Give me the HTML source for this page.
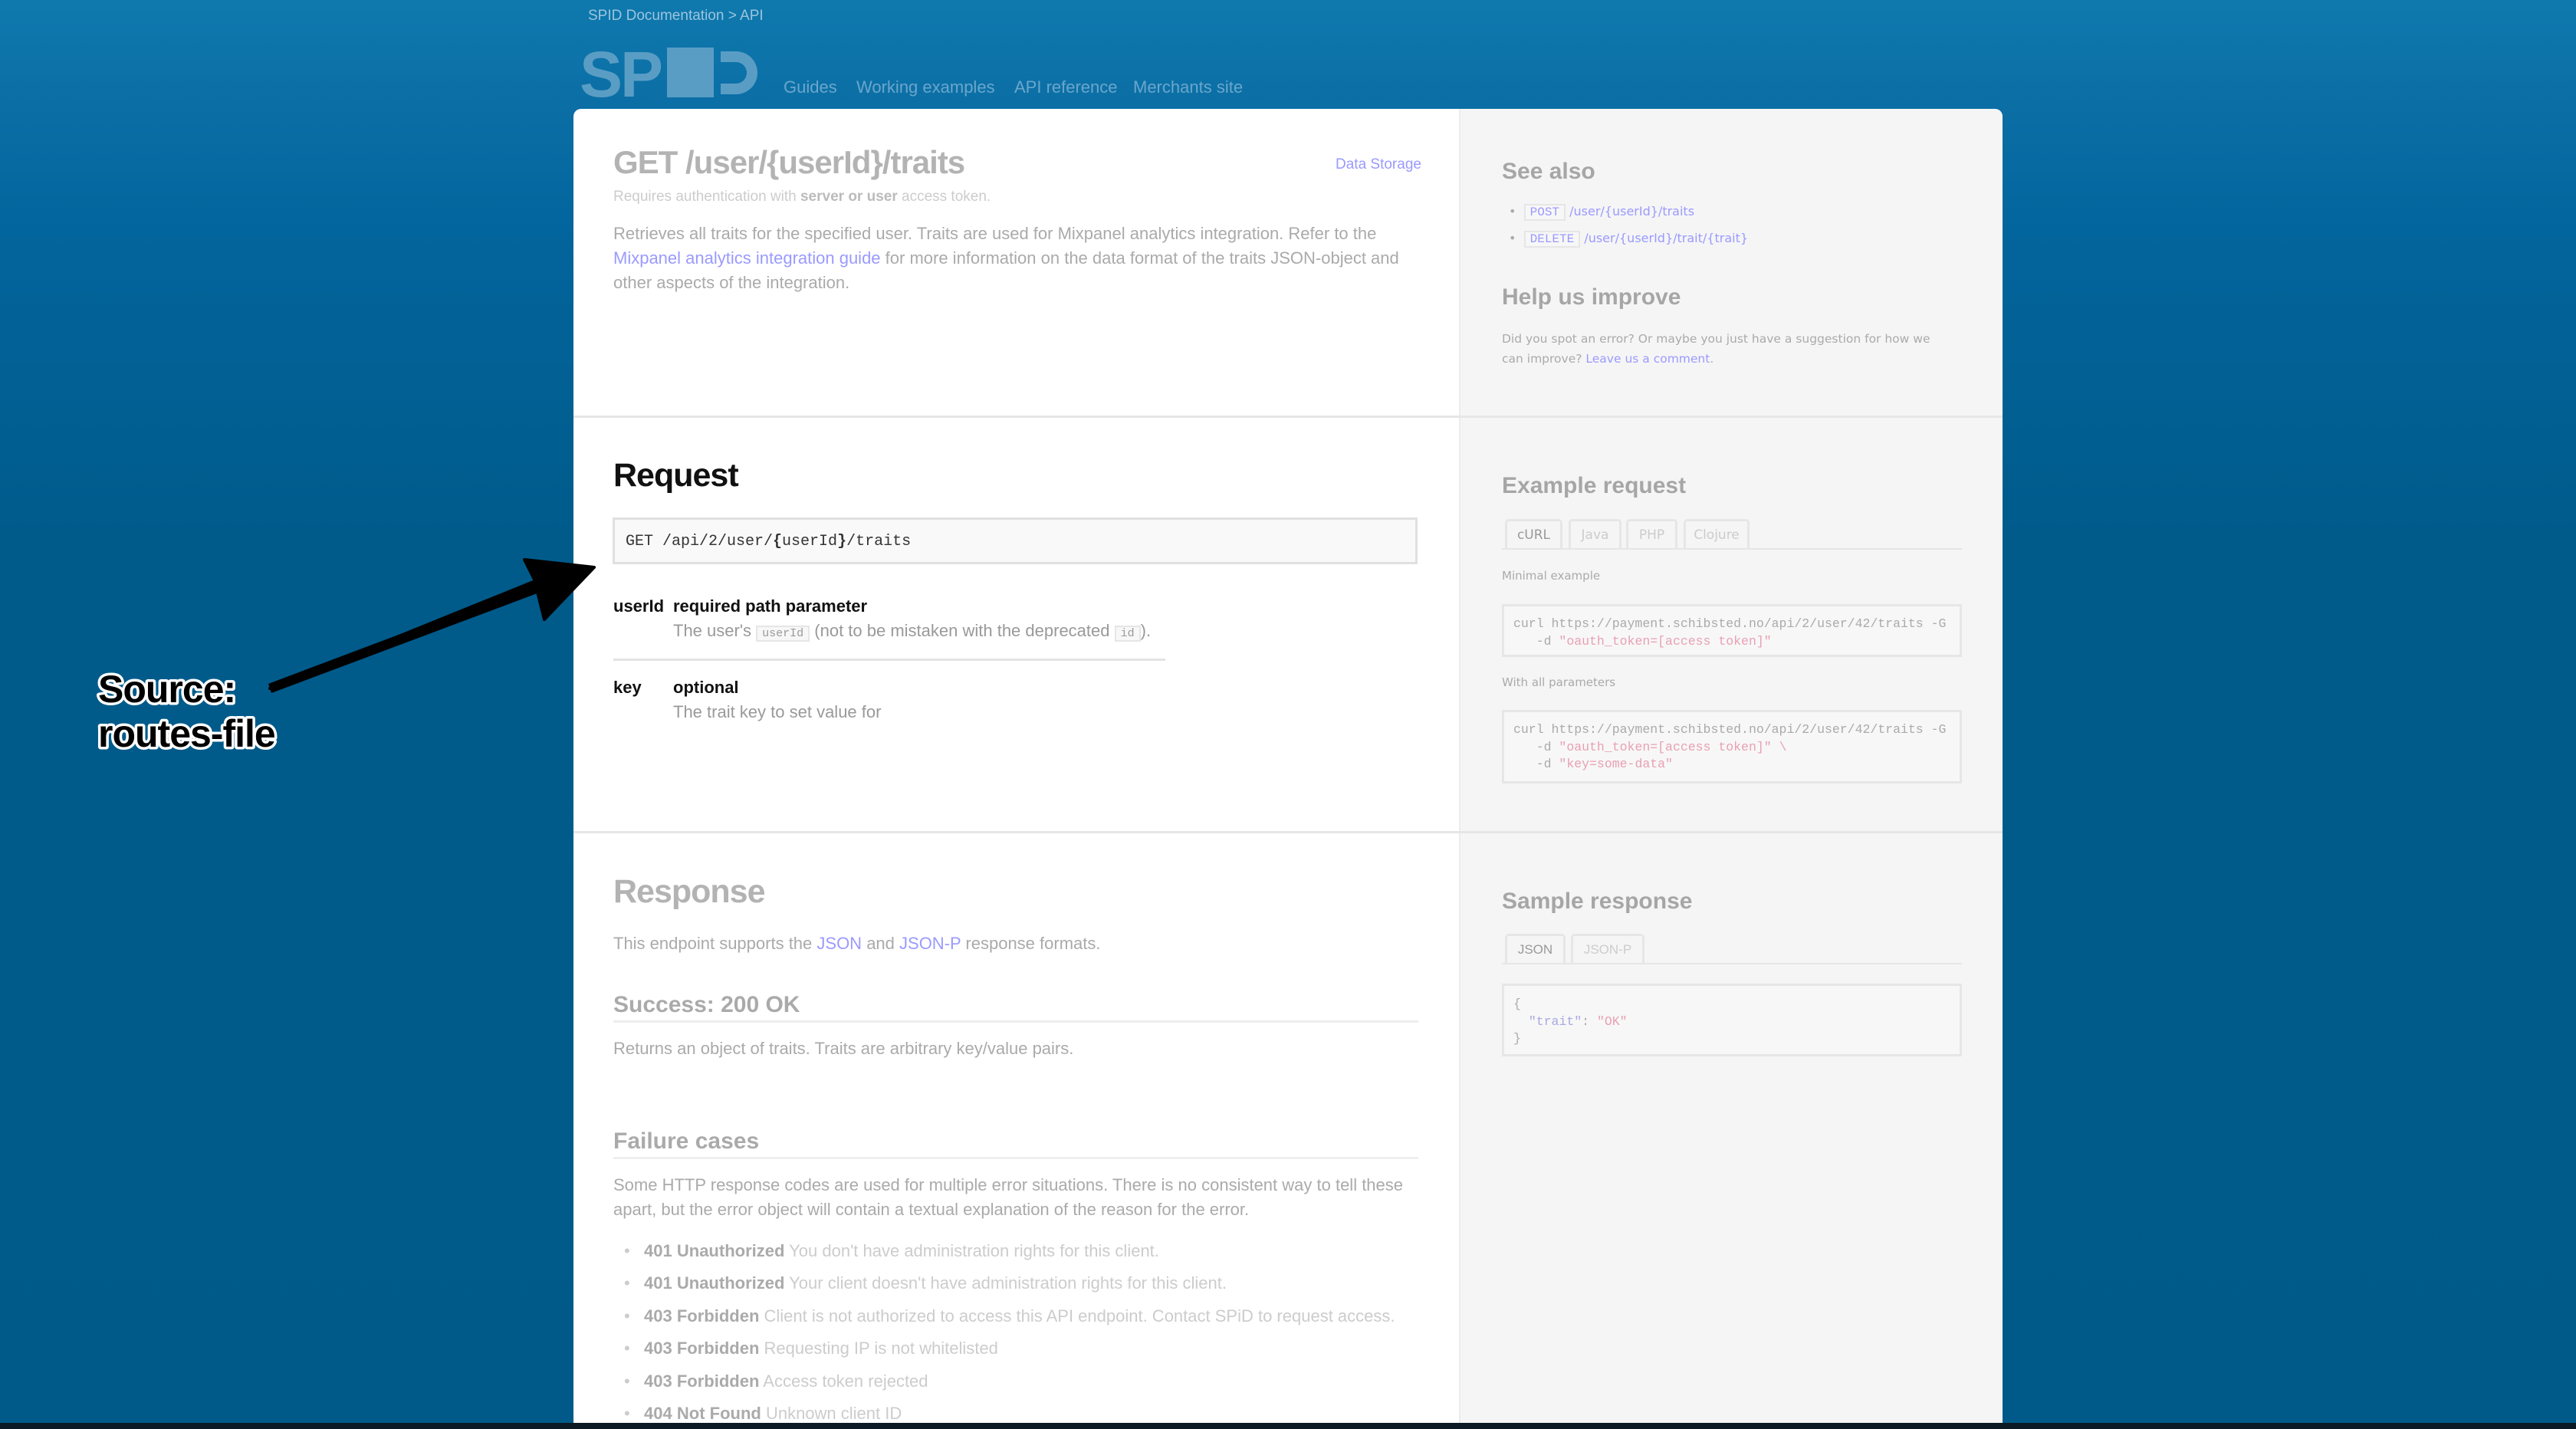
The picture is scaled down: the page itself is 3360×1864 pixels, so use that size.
<!DOCTYPE html>
<html><head><meta charset="utf-8"><style>
*{margin:0;padding:0;box-sizing:border-box}
body{width:3360px;height:1864px;overflow:hidden;position:relative;font-family:"Liberation Sans",Arial,sans-serif;background:linear-gradient(#0f79ae 0px,#0b6ea5 140px,#03659d 300px,#005b8b 700px,#005a89 1864px)}
.a{position:absolute;white-space:nowrap}
.card{position:absolute;left:748px;top:142px;width:1864px;height:1722px;background:#fff;border-radius:10px 10px 0 0;overflow:hidden}
.side{position:absolute;left:1155px;top:0;width:709px;height:100%;background:#f5f5f5;border-left:2px solid #ececec}
.hr{position:absolute;left:0;width:1864px;height:3px;background:#e6e6e6}
.p{color:#aaa;font-size:22px}
.lk{color:#9a9aff}
.sd{font-family:"DejaVu Sans",sans-serif;font-size:16px;color:#aaa}
.h3{font-weight:bold;font-size:30px;color:#a6a6a6}
.code{position:absolute;left:1211px;width:600px;border:3px solid #e6e6e6;background:#f7f7f7;font-family:"Liberation Mono",monospace;font-size:16.5px;color:#aaa;line-height:22.5px;padding:12px 0 0 12px;white-space:pre}
.s{color:#e8a0b4}
.tab{position:absolute;height:40px;border:3px solid #e6e6e6;border-bottom:none;border-radius:5px 5px 0 0;font-size:17px;color:#ccc;font-family:"DejaVu Sans",sans-serif;text-align:center;line-height:36px}
.tab.on{color:#999;background:#f5f5f5}
.tk{border:2px solid #e6e6e6;background:#f7f7f7;font-family:"Liberation Mono",monospace;font-size:15px;padding:0 6px}
</style></head><body>
<div class="a" style="left:767px;top:10px;font-size:19px;color:#9cc4dd">SPID Documentation &gt; API</div>
<div class="a" style="left:756px;top:52px;font-size:84px;font-weight:bold;color:#5a9dc4;letter-spacing:-3px;line-height:90px">SP</div>
<div class="a" style="left:870px;top:62px;width:61px;height:65px;background:#5a9dc4"></div>
<div class="a" style="left:940px;top:67px;width:48px;height:56px;border:14px solid #5a9dc4;border-left:none;border-radius:0 28px 28px 0"></div>
<div class="a" style="left:1022px;top:101px;font-size:22px;color:#6aa6cc">Guides</div>
<div class="a" style="left:1117px;top:101px;font-size:22px;color:#6aa6cc">Working examples</div>
<div class="a" style="left:1323px;top:101px;font-size:22px;color:#6aa6cc">API reference</div>
<div class="a" style="left:1478px;top:101px;font-size:22px;color:#6aa6cc">Merchants site</div>

<div class="card">
<div class="side"></div>
<div class="hr" style="top:400px"></div>
<div class="hr" style="top:942px"></div>

<div class="a" style="left:52px;top:46px;font-size:42px;font-weight:bold;color:#b3b3b3;letter-spacing:-1px">GET /user/{userId}/traits</div>
<div class="a lk" style="left:994px;top:62px;font-size:19px">Data Storage</div>
<div class="a" style="left:52px;top:104px;font-size:19px;color:#ccc">Requires authentication with <b style="color:#bbb">server or user</b> access token.</div>
<div class="a p" style="left:52px;top:147px;line-height:32px">Retrieves all traits for the specified user. Traits are used for Mixpanel analytics integration. Refer to the<br><span class="lk">Mixpanel analytics integration guide</span> for more information on the data format of the traits JSON-object and<br>other aspects of the integration.</div>

<div class="a" style="left:52px;top:454px;font-size:43px;font-weight:bold;color:#111;letter-spacing:-1px">Request</div>
<div class="a" style="left:51px;top:533px;width:1050px;height:61px;border:3px solid #e0e0e0;background:#f9f9f9;font-family:'Liberation Mono',monospace;font-size:20px;color:#333;line-height:58px;padding-left:14px">GET /api/2/user/<b>{</b>userId<b>}</b>/traits</div>
<div class="a" style="left:52px;top:636px;font-size:22px;font-weight:bold;color:#111">userId</div>
<div class="a" style="left:130px;top:636px;font-size:22px;font-weight:bold;color:#111">required path parameter</div>
<div class="a p" style="left:130px;top:668px;color:#999">The user's <span class="tk">userId</span> (not to be mistaken with the deprecated <span class="tk">id</span>).</div>
<div class="a" style="left:52px;top:717px;width:720px;height:3px;background:#e3e3e3"></div>
<div class="a" style="left:52px;top:742px;font-size:22px;font-weight:bold;color:#111">key</div>
<div class="a" style="left:130px;top:742px;font-size:22px;font-weight:bold;color:#111">optional</div>
<div class="a p" style="left:130px;top:774px;color:#999">The trait key to set value for</div>

<div class="a" style="left:52px;top:997px;font-size:43px;font-weight:bold;color:#b3b3b3;letter-spacing:-1px">Response</div>
<div class="a p" style="left:52px;top:1076px">This endpoint supports the <span class="lk">JSON</span> and <span class="lk">JSON-P</span> response formats.</div>
<div class="a" style="left:52px;top:1152px;font-size:30px;font-weight:bold;color:#aaa">Success: 200 OK</div>
<div class="a" style="left:52px;top:1189px;width:1050px;height:3px;background:#eee"></div>
<div class="a p" style="left:52px;top:1213px">Returns an object of traits. Traits are arbitrary key/value pairs.</div>
<div class="a" style="left:52px;top:1330px;font-size:30px;font-weight:bold;color:#aaa">Failure cases</div>
<div class="a" style="left:52px;top:1367px;width:1050px;height:3px;background:#eee"></div>
<div class="a p" style="left:52px;top:1388px;line-height:32px">Some HTTP response codes are used for multiple error situations. There is no consistent way to tell these<br>apart, but the error object will contain a textual explanation of the reason for the error.</div>
<div class="a" style="left:66px;top:1469px;font-size:22px;color:#ccc;line-height:42.4px">
•&nbsp;&nbsp;&nbsp;<b style="color:#aaa">401 Unauthorized</b> You don't have administration rights for this client.<br>
•&nbsp;&nbsp;&nbsp;<b style="color:#aaa">401 Unauthorized</b> Your client doesn't have administration rights for this client.<br>
•&nbsp;&nbsp;&nbsp;<b style="color:#aaa">403 Forbidden</b> Client is not authorized to access this API endpoint. Contact SPiD to request access.<br>
•&nbsp;&nbsp;&nbsp;<b style="color:#aaa">403 Forbidden</b> Requesting IP is not whitelisted<br>
•&nbsp;&nbsp;&nbsp;<b style="color:#aaa">403 Forbidden</b> Access token rejected<br>
•&nbsp;&nbsp;&nbsp;<b style="color:#aaa">404 Not Found</b> Unknown client ID</div>

<div class="a h3" style="left:1211px;top:65px">See also</div>
<div class="a sd" style="left:1220px;top:117px;line-height:34px;font-size:16px">•&nbsp;&nbsp;<span class="tk lk" style="font-size:16px">POST</span> <span class="lk">/user/{userId}/traits</span><br>•&nbsp;&nbsp;<span class="tk lk" style="font-size:16px">DELETE</span> <span class="lk">/user/{userId}/trait/{trait}</span></div>
<div class="a h3" style="left:1211px;top:229px">Help us improve</div>
<div class="a sd" style="left:1211px;top:287px;line-height:26px;font-size:15.5px">Did you spot an error? Or maybe you just have a suggestion for how we<br>can improve? <span class="lk">Leave us a comment</span>.</div>

<div class="a h3" style="left:1211px;top:475px">Example request</div>
<div class="tab on" style="left:1215px;top:535px;width:75px">cURL</div>
<div class="tab" style="left:1298px;top:535px;width:69px">Java</div>
<div class="tab" style="left:1373px;top:535px;width:67px">PHP</div>
<div class="tab" style="left:1448px;top:535px;width:86px">Clojure</div>
<div class="a" style="left:1211px;top:573px;width:600px;height:2px;background:#e6e6e6"></div>
<div class="a sd" style="left:1211px;top:600px;font-size:15px">Minimal example</div>
<div class="code" style="top:646px;height:69px">curl https://payment.schibsted.no/api/2/user/42/traits -G
   -d <span class="s">"oauth_token=[access token]"</span></div>
<div class="a sd" style="left:1211px;top:739px;font-size:15px">With all parameters</div>
<div class="code" style="top:784px;height:96px">curl https://payment.schibsted.no/api/2/user/42/traits -G
   -d <span class="s">"oauth_token=[access token]" \</span>
   -d <span class="s">"key=some-data"</span></div>

<div class="a h3" style="left:1211px;top:1017px">Sample response</div>
<div class="tab on" style="left:1215px;top:1076px;width:79px;font-family:'Liberation Sans',sans-serif">JSON</div>
<div class="tab" style="left:1301px;top:1076px;width:96px;font-family:'Liberation Sans',sans-serif">JSON-P</div>
<div class="a" style="left:1211px;top:1114px;width:600px;height:2px;background:#e6e6e6"></div>
<div class="code" style="top:1141px;height:95px;padding-top:13px">{
  <span style="color:#a8a8e0">"trait"</span>: <span class="s">"OK"</span>
}</div>
</div>

<div class="a" style="left:0;top:1856px;width:3360px;height:8px;background:#0b1a24"></div>

<svg class="a" style="left:0;top:0" width="3360" height="1864">
<path d="M352 898 L700 768 L710 808 L775 740 L684 730 L698 758 Z" fill="#000" stroke="#000" stroke-width="4" stroke-linejoin="round"/>
<path d="M350 892 L700 760 L706 772 L354 904 Z" fill="#000"/>
<g font-family="Liberation Sans,sans-serif" font-weight="bold" font-size="50" letter-spacing="-1">
<text x="128" y="916" fill="#000" stroke="#fff" stroke-width="7" paint-order="stroke" stroke-linejoin="round">Source:</text>
<text x="128" y="974" fill="#000" stroke="#fff" stroke-width="7" paint-order="stroke" stroke-linejoin="round">routes-file</text>
</g>
</svg>
</body></html>
